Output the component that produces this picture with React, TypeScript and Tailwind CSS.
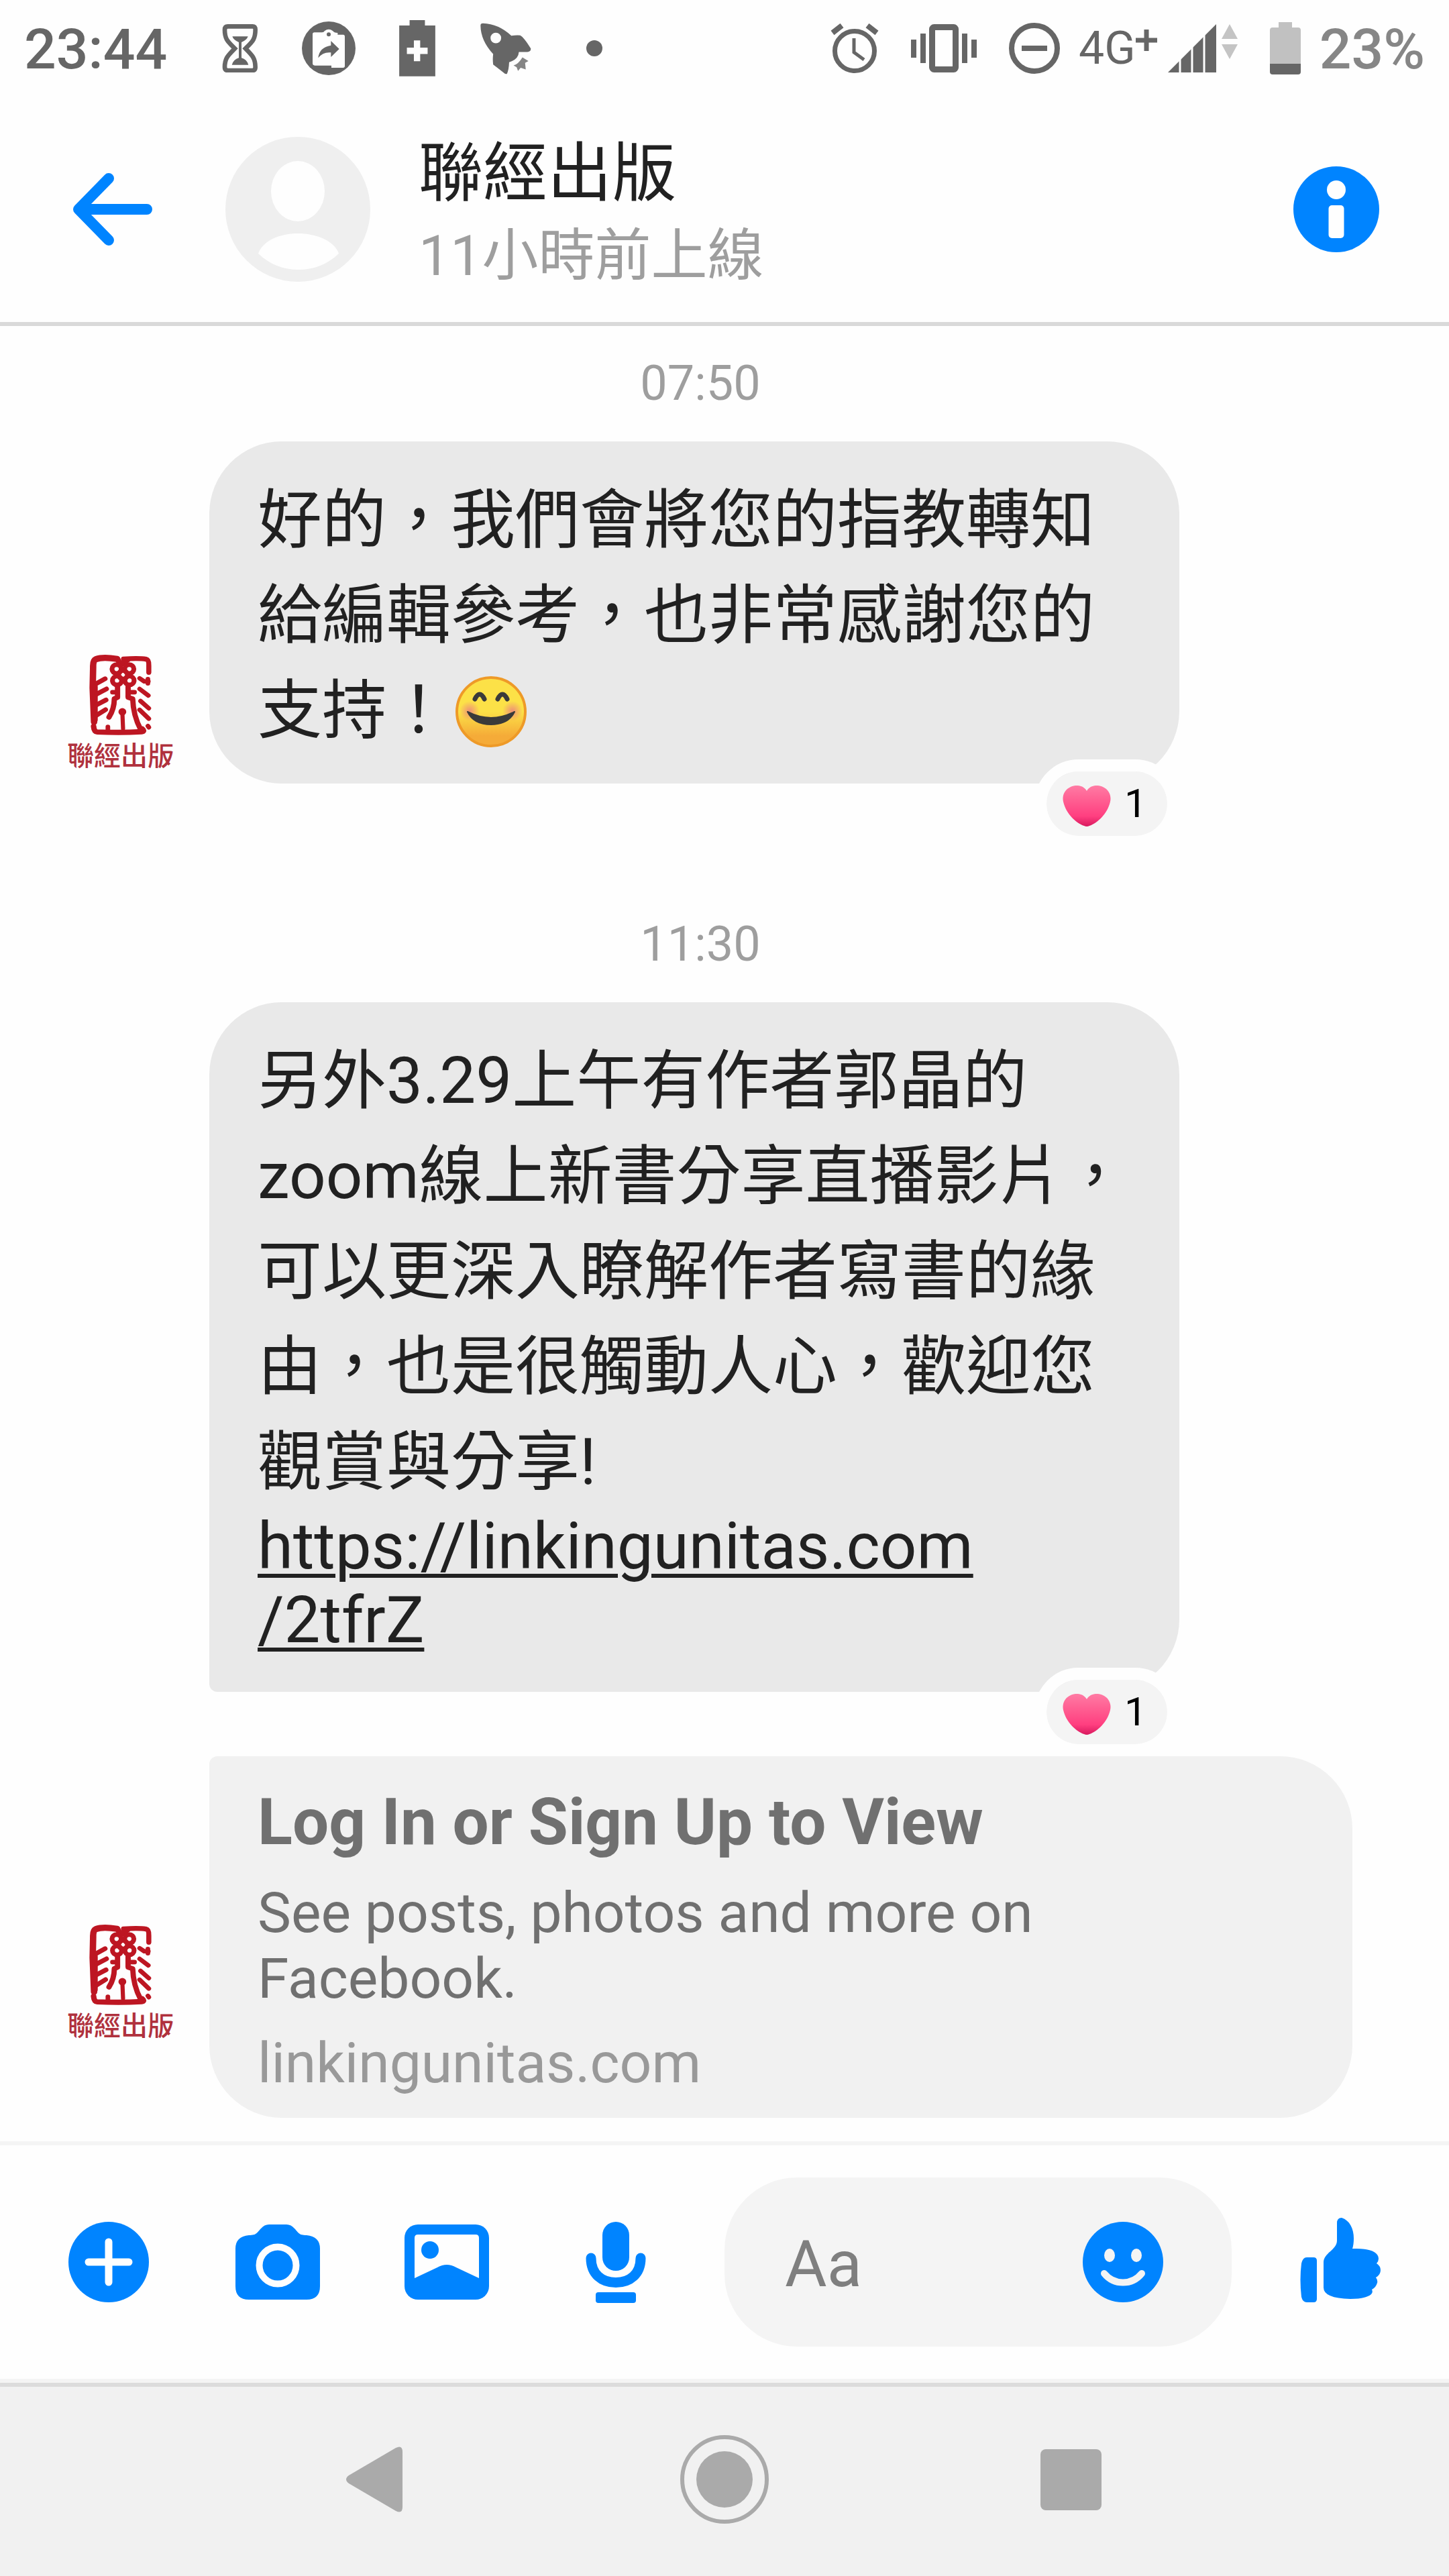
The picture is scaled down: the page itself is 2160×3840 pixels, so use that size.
import type { ReactNode } from "react";

const FONT = "font-[Roboto,'Noto_Sans_CJK_TC',sans-serif]";

/* ---------- status bar ---------- */

function HourglassIcon() {
  return (
    <svg className="h-[72px] w-[54px]" viewBox="35 47 160 216" aria-hidden="true">
      <path
        d="M60 57H170Q183 57 183 72C183 115 170 125 139 156C170 187 183 200 183 240Q183 254 170 254H60Q46 254 46 240C46 200 60 187 91 156C60 125 46 115 46 72Q46 57 60 57Z"
        fill="none"
        stroke="#666"
        strokeWidth="20"
      />
      <path d="M80 102H150Q145 118 121 128V198Q145 205 152 229H78Q85 205 109 198V128Q85 118 80 102Z" fill="#666" />
    </svg>
  );
}

function ShareCircleIcon() {
  return (
    <svg className="size-20" viewBox="390 35 240 240" aria-hidden="true">
      <circle cx="510" cy="155" r="120" fill="#666" />
      <path
        d="M438 92q0-8 8-8H480Q488 84 492 77Q510 64 528 77Q534 86 550 86V94H576Q582 94 582 102V234Q582 242 574 242H522V232H448Q438 232 438 222Z"
        fill="#fefefe"
      />
      <circle cx="510" cy="93" r="9" fill="#666" />
      <path d="M520 122L557 158L520 194V174Q485 170 463 198Q468 150 520 142Z" fill="#666" />
    </svg>
  );
}

function BatteryPlusIcon() {
  return (
    <svg className="h-[84px] w-[54px]" viewBox="826 32 160 250" aria-hidden="true">
      <path d="M872 32h68v24h46v225H826V56h46z" fill="#666" />
      <path d="M891 122h28v32h33v28h-33v32h-28v-32h-31v-28h31z" fill="#fefefe" />
    </svg>
  );
}

function RocketIcon() {
  return (
    <svg className="h-[77px] w-[76px]" viewBox="1188 40 230 232" aria-hidden="true">
      <path
        d="M1189 52Q1189 42 1200 42Q1270 44 1328 98Q1350 94 1368 96Q1385 105 1416 156Q1416 170 1400 171H1362Q1360 205 1318 217Q1317 250 1308 270Q1300 272 1290 262Q1262 240 1246 228Q1243 205 1246 180Q1190 120 1189 52Z"
        fill="#666"
      />
      <circle cx="1258" cy="108" r="24" fill="#fefefe" />
      <path d="M1378 195L1405 212L1390 220L1393 250L1370 242L1358 257L1352 240L1338 232Q1360 225 1378 195Z" fill="#858585" />
    </svg>
  );
}

function AlarmIcon() {
  return (
    <svg className="h-[74px] w-[72px]" viewBox="0 0 72 74" fill="none" stroke="#666" aria-hidden="true">
      <circle cx="36" cy="41" r="29.5" strokeWidth="7" />
      <path d="M35 22V43L50 54" strokeWidth="5" />
      <path d="M17 3L3 14M55 3L69 14" strokeWidth="8" />
    </svg>
  );
}

function VibrateIcon() {
  return (
    <svg className="h-[72px] w-[98px]" viewBox="0 0 98 72" aria-hidden="true">
      <rect x="31.5" y="4.5" width="35" height="63" rx="3" fill="none" stroke="#666" strokeWidth="9" />
      <path d="M0 23h8v27H0zM14 14h8v44h-8zM76 14h8v44h-8zM90 23h8v27h-8z" fill="#666" />
    </svg>
  );
}

function DoNotDisturbIcon() {
  return (
    <svg className="size-[76px]" viewBox="0 0 76 76" fill="none" stroke="#666" strokeWidth="8" aria-hidden="true">
      <circle cx="38" cy="38" r="34" />
      <path d="M19 38H57" />
    </svg>
  );
}

function SignalIcon() {
  return (
    <svg className="h-[72px] w-[104px]" viewBox="0 0 104 72" aria-hidden="true">
      <path d="M0 72L72 0V72Z" fill="#666" />
      <path d="M18 0V72M36 0V72M54 0V72" stroke="#fefefe" strokeWidth="3" />
      <path d="M92 0L104 22H80ZM80 30H104L92 52Z" fill="#c4c4c4" />
    </svg>
  );
}

function BatteryIcon() {
  return (
    <svg className="h-[78px] w-[46px]" viewBox="0 0 46 78" aria-hidden="true">
      <path d="M13 0H33V8H42Q46 8 46 12V62H0V12Q0 8 4 8H13Z" fill="#c1c1c1" />
      <path d="M0 62H46V74Q46 78 42 78H4Q0 78 0 74Z" fill="#666" />
    </svg>
  );
}

function Slot({ children }: { children: ReactNode }) {
  return <span className="flex w-[132px] shrink-0 items-center justify-center">{children}</span>;
}

function StatusBar() {
  return (
    <div className="flex h-36 items-center justify-between pr-9 pl-9 text-[#666]">
      <div className="flex items-center">
        <time className="w-64 pt-1 text-[84px] leading-none font-medium">23:44</time>
        <Slot><HourglassIcon /></Slot>
        <Slot><ShareCircleIcon /></Slot>
        <Slot><BatteryPlusIcon /></Slot>
        <Slot><RocketIcon /></Slot>
        <Slot><span className="size-6 rounded-full bg-[#666]" /></Slot>
      </div>
      <div className="flex items-center">
        <div className="flex items-center gap-12">
          <AlarmIcon />
          <VibrateIcon />
          <DoNotDisturbIcon />
        </div>
        <span className="ml-7 flex items-center text-[68px] leading-none">
          4G
          <svg className="mb-6 size-8" viewBox="0 0 32 32" stroke="#666" strokeWidth="7" aria-label="+">
            <path d="M16 0V32M0 16H32" />
          </svg>
        </span>
        <span className="ml-4"><SignalIcon /></span>
        <span className="ml-12"><BatteryIcon /></span>
        <span className="ml-7 pt-1 text-[84px] leading-none font-medium text-[#868686]">23%</span>
      </div>
    </div>
  );
}

/* ---------- header ---------- */

function Header() {
  return (
    <header className="flex h-[342px] items-center border-b-6 border-[#d9d9d9] pr-[104px] pl-[108px]">
      <button type="button" aria-label="Back" className="shrink-0">
        <svg className="h-[108px] w-[120px]" viewBox="0 0 120 108" fill="none" stroke="#0084ff" strokeWidth="16" strokeLinecap="round" strokeLinejoin="round">
          <path d="M54 8L9 54L54 100M12 54H111" />
        </svg>
      </button>
      <svg className="ml-[108px] size-[216px] shrink-0" viewBox="0 0 216 216" role="img" aria-label="Profile picture">
        <circle cx="108" cy="108" r="108" fill="#efefef" />
        <ellipse cx="108" cy="81" rx="40" ry="45" fill="#fefefe" />
        <path d="M49 174C56 154 82 144 108 144C134 144 162 154 169 174C152 190 132 198 109 198C86 198 66 190 49 174Z" fill="#fefefe" />
      </svg>
      <div className="ml-[72px] min-w-0 flex-1 pt-4">
        <h1 className="text-[96px] leading-[124px] text-[#212121]">聯經出版</h1>
        <p className="text-[84px] leading-[124px] text-[#9e9e9e]">11小時前上線</p>
      </div>
      <button type="button" aria-label="Conversation info" className="shrink-0">
        <svg className="size-32" viewBox="0 0 128 128">
          <circle cx="64" cy="64" r="64" fill="#0084ff" />
          <circle cx="64" cy="35" r="14" fill="#fefefe" />
          <rect x="52.5" y="58" width="23" height="49" rx="5" fill="#fefefe" />
        </svg>
      </button>
    </header>
  );
}

/* ---------- messages ---------- */

function PublisherLogo() {
  return (
    <div className="flex size-[216px] shrink-0 flex-col items-center overflow-hidden rounded-full pt-6">
      <svg className="h-[120px] w-[96px]" viewBox="178 75 280 365" preserveAspectRatio="none" fill="none" stroke="#bd1622" strokeLinecap="round" strokeLinejoin="round" role="img" aria-label="Publisher seal">
        <path d="M302 94Q240 84 210 95Q197 100 198 130L196 225L202 380" strokeWidth="28" />
        <path d="M206 220V370" strokeWidth="24" />
        <path d="M200 400Q202 424 216 425Q320 430 408 424Q424 422 412 412" strokeWidth="24" />
        <path d="M330 94Q400 90 428 95Q441 98 440 125V155" strokeWidth="22" />
        <path d="M436 185V205M436 398L440 404" strokeWidth="20" />
        <path d="M305 97L318 120L348 98" strokeWidth="24" />
        <g strokeWidth="21">
          <circle cx="300" cy="140" r="20" />
          <circle cx="355" cy="140" r="20" />
          <circle cx="302" cy="192" r="20" />
          <circle cx="356" cy="192" r="20" />
          <circle cx="328" cy="166" r="19" />
        </g>
        <path d="M282 245H305V220M350 220V245H378" strokeWidth="20" />
        <path d="M304 215V268L290 275Q290 320 267 358M350 215V268L370 275Q372 350 405 415" strokeWidth="23" />
        <path d="M325 335L328 410" strokeWidth="18" />
        <circle cx="325" cy="334" r="12" fill="#bd1622" strokeWidth="10" />
        <path d="M212 206L250 184M212 254L256 230M210 304L254 280M212 350L252 324" strokeWidth="21" />
        <path d="M400 182L420 196H438M400 230L438 260M404 285L440 318M400 325L440 365" strokeWidth="20" />
        <path d="M262 402V415" strokeWidth="20" />
      </svg>
      <span className="mt-1 font-[Noto_Sans_CJK_TC,sans-serif] text-[40px] leading-[48px] font-medium whitespace-nowrap text-[#b0313d]">
        聯經出版
      </span>
    </div>
  );
}

function BlushEmoji() {
  return (
    <svg className="ml-1.5 inline-block size-[108px] align-text-bottom" viewBox="0 0 108 108" role="img" aria-label="smiling face with smiling eyes">
      <defs>
        <linearGradient id="face" x1="0" y1="0" x2="0" y2="1">
          <stop offset="0.5" stopColor="#fce147" />
          <stop offset="0.85" stopColor="#f5ab38" />
        </linearGradient>
        <radialGradient id="cheek">
          <stop offset="0" stopColor="#ee8f76" />
          <stop offset="1" stopColor="#ee8f76" stopOpacity="0" />
        </radialGradient>
      </defs>
      <circle cx="54" cy="54" r="51" fill="url(#face)" stroke="#ee9a28" strokeWidth="4" />
      <circle cx="22" cy="53" r="15" fill="url(#cheek)" />
      <circle cx="86" cy="53" r="15" fill="url(#cheek)" />
      <path d="M30 35Q37 21 44 35M64 35Q71 21 78 35" fill="none" stroke="#3a3a3a" strokeWidth="7" strokeLinecap="round" />
      <path d="M19 54Q54 72 89 54Q80 73 54 73Q28 73 19 54Z" fill="#3a3a3a" stroke="#3a3a3a" strokeWidth="2" strokeLinejoin="round" />
    </svg>
  );
}

function Reaction({ count }: { count: number }) {
  return (
    <button
      type="button"
      aria-label={`Heart reactions: ${count}`}
      className="absolute right-0 -bottom-24 flex h-[132px] w-[216px] items-center gap-5 rounded-full border-18 border-[#fefefe] bg-[#f4f4f4] bg-clip-padding pl-6"
    >
      <svg className="mt-1.5 h-[61px] w-[72px]" viewBox="0 0 72 61" aria-hidden="true">
        <defs>
          <linearGradient id="heart" x1="0" y1="0" x2="0" y2="1">
            <stop offset="0" stopColor="#ff7ba4" />
            <stop offset="0.35" stopColor="#ff5f92" />
            <stop offset="0.75" stopColor="#ff3f80" />
            <stop offset="1" stopColor="#d8195e" />
          </linearGradient>
        </defs>
        <path d="M36 8C30 -2 18 -1 12 2C3 6 -1 15 1 24C5 42 20 56 32 60Q36 62 40 60C52 56 67 42 71 24C73 15 69 6 60 2C54 -1 42 -2 36 8Z" fill="url(#heart)" />
      </svg>
      <span className="text-[60px] leading-none text-black">{count}</span>
    </button>
  );
}

function TimeLabel({ children }: { children: string }) {
  return (
    <time className="flex h-[172px] items-center justify-center pr-[72px] text-[72px] leading-none text-[#9e9e9e]">
      {children}
    </time>
  );
}

function Messages() {
  return (
    <main className="flex-1">
      <TimeLabel>07:50</TimeLabel>
      <article className="flex items-end gap-6 pl-[72px]">
        <PublisherLogo />
        <div className="relative max-w-[1446px] rounded-[108px] bg-[#e9e9e9] px-[72px] pt-[46px] pb-[38px] text-[96px] leading-[142px] text-[#212121]">
          <p>
            好的，我們會將您的指教轉知給編輯參考，也非常感謝您的支持！
            <BlushEmoji />
          </p>
          <Reaction count={1} />
        </div>
      </article>

      <div className="mt-[154px]">
        <TimeLabel>11:30</TimeLabel>
      </div>
      <article className="pl-[312px]">
        <div className="relative max-w-[1446px] rounded-[108px] rounded-bl-xl bg-[#e9e9e9] px-[72px] pt-[46px] pb-[52px] text-[96px] leading-[142px] text-[#212121]">
          <p>另外3.29上午有作者郭晶的zoom線上新書分享直播影片，可以更深入瞭解作者寫書的緣由，也是很觸動人心，歡迎您觀賞與分享!</p>
          <a href="https://linkingunitas.com/2tfrZ" className="block leading-[110px] underline decoration-6 underline-offset-8">
            https://linkingunitas.com
            <wbr />
            /2tfrZ
          </a>
          <Reaction count={1} />
        </div>
      </article>

      <article className="mt-24 flex items-end gap-6 pr-36 pl-[72px]">
        <div className="mb-24">
          <PublisherLogo />
        </div>
        <a href="https://linkingunitas.com/2tfrZ" className="block min-w-0 flex-1 rounded-[108px] rounded-tl-xl bg-[#f1f1f1] pt-[42px] pr-36 pb-8 pl-[72px] text-[84px] leading-[98px] text-[#707070]">
          <h2 className="text-[96px] leading-[113px] font-bold">Log In or Sign Up to View</h2>
          <p className="mt-[30px]">See posts, photos and more on Facebook.</p>
          <p className="mt-7 text-[#999]">linkingunitas.com</p>
        </a>
      </article>
    </main>
  );
}

/* ---------- composer ---------- */

function ToolButton({ label, children }: { label: string; children: ReactNode }) {
  return (
    <button type="button" aria-label={label} className="flex w-[252px] shrink-0 items-center justify-center">
      {children}
    </button>
  );
}

function Composer() {
  return (
    <form className="flex h-[360px] items-center border-y-6 border-[#f4f4f4] pl-9" onSubmit={(e) => e.preventDefault()}>
      <ToolButton label="More actions">
        <svg className="size-[120px]" viewBox="0 0 120 120">
          <circle cx="60" cy="60" r="60" fill="#0084ff" />
          <path d="M60 30V90M30 60H90" stroke="#fefefe" strokeWidth="11" strokeLinecap="round" />
        </svg>
      </ToolButton>
      <ToolButton label="Camera">
        <svg className="h-[112px] w-[126px]" viewBox="0 0 126 112">
          <path d="M20 16C32 16 32 12 38 6Q43 0 50 0H76Q83 0 88 6C94 12 94 16 106 16Q126 18 126 36V92Q126 112 106 112H20Q0 112 0 92V36Q0 18 20 16Z" fill="#0084ff" />
          <circle cx="63" cy="61" r="27.5" fill="none" stroke="#fefefe" strokeWidth="10" />
        </svg>
      </ToolButton>
      <ToolButton label="Photos">
        <svg className="h-[112px] w-[126px]" viewBox="0 0 126 112">
          <rect width="126" height="112" rx="20" fill="#0084ff" />
          <path d="M15 20Q15 15 20 15H106Q111 15 111 20V80L77 64Q63 56 49 64L15 80Z" fill="#fefefe" />
          <circle cx="38" cy="38" r="13" fill="#0084ff" />
        </svg>
      </ToolButton>
      <ToolButton label="Voice message">
        <svg className="h-[121px] w-[90px]" viewBox="0 0 90 121">
          <rect x="25" y="0" width="40" height="73" rx="20" fill="#0084ff" />
          <path d="M8 54C8 78 24 90.5 45 90.5C66 90.5 82 78 82 54" fill="none" stroke="#0084ff" strokeWidth="15" strokeLinecap="round" />
          <rect x="15" y="105" width="60" height="16" rx="4" fill="#0084ff" />
        </svg>
      </ToolButton>
      <div className="ml-9 flex h-[252px] min-w-0 flex-1 items-center rounded-[108px] bg-[#f4f4f4] pr-[102px] pl-[90px]">
        <input type="text" aria-label="Message" placeholder="Aa" className="min-w-0 flex-1 bg-transparent pt-1.5 text-[96px] text-[#212121] outline-none placeholder:text-[#7f7f7f]" />
        <button type="button" aria-label="Emoji" className="shrink-0">
          <svg className="size-[120px]" viewBox="0 0 120 120">
            <circle cx="60" cy="60" r="60" fill="#0084ff" />
            <ellipse cx="40" cy="50" rx="8" ry="10" fill="#f4f4f4" />
            <ellipse cx="80" cy="50" rx="8" ry="10" fill="#f4f4f4" />
            <path d="M32 77Q43 90.5 60 90.5Q77 90.5 88 77" fill="none" stroke="#f4f4f4" strokeWidth="10" strokeLinecap="round" />
          </svg>
        </button>
      </div>
      <button type="button" aria-label="Send like" className="flex w-[324px] shrink-0 items-center justify-center">
        <svg className="mb-1.5 h-[126px] w-[120px]" viewBox="0 0 120 126" fill="#0084ff">
          <path d="M55 8Q55 0 62 0C74 4 80 16 80 31Q80 40 78 46H84C104 46 117 51 117 61Q117 65 114 68Q120 72 120 78Q120 85 113 89Q116 93 115 97Q113 104 107 107Q109 111 106 114Q98 121 75 121Q35 120 35 104V67C35 52 55 48 55 34Z" />
          <path d="M10 59H20Q25 59 25 64V121Q25 126 20 126H10Q4 126 2 118Q-1 92 2 68Q4 59 10 59Z" />
        </svg>
      </button>
    </form>
  );
}

/* ---------- system navigation ---------- */

function NavBar() {
  const slot = "flex w-[518px] items-center";
  return (
    <nav className="flex h-72 items-center justify-center border-t-6 border-[#dcdcdc] bg-[#f1f1f1] pb-1.5">
      <button type="button" aria-label="System back" className={`${slot} justify-center pr-2`}>
        <svg className="h-[98px] w-[84px]" viewBox="0 0 84 98" fill="#aaa">
          <path d="M4 43L74 2Q84 -3 84 8V90Q84 101 74 96L4 55Q-4 49 4 43Z" />
        </svg>
      </button>
      <button type="button" aria-label="Home" className={`${slot} justify-center`}>
        <svg className="size-[132px]" viewBox="0 0 132 132">
          <circle cx="66" cy="66" r="63" fill="none" stroke="#aaa" strokeWidth="6" />
          <circle cx="66" cy="66" r="42" fill="#aaa" />
        </svg>
      </button>
      <button type="button" aria-label="Recent apps" className={`${slot} justify-center pr-1`}>
        <span className="size-[91px] rounded-lg bg-[#aaa]" />
      </button>
    </nav>
  );
}

export default function App() {
  return (
    <div className={`flex min-h-screen flex-col bg-[#fefefe] ${FONT}`}>
      <StatusBar />
      <Header />
      <Messages />
      <Composer />
      <NavBar />
    </div>
  );
}
